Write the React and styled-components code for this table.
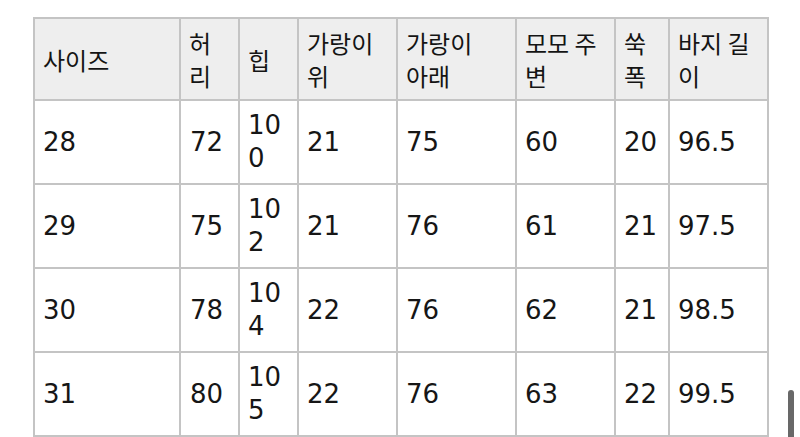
import styled, { createGlobalStyle } from 'styled-components';

const GlobalStyle = createGlobalStyle`
  html, body {
    margin: 0;
    padding: 0;
    background: #ffffff;
  }
  body {
    width: 800px;
    height: 437px;
    overflow: hidden;
    position: relative;
  }
`;

const Page = styled.div`
  padding: 17px 0 0 33px;
`;

const SizeTable = styled.div`
  display: grid;
  width: max-content;
  grid-template-columns: 144px 57px 57px 97px 117px 97px 52px 97px;
  grid-template-rows: 80px repeat(4, 82px);
  gap: 2px;
  padding: 2px;
  background: #c4c4c4;
`;

const HeadCell = styled.div`
  display: flex;
  align-items: center;
  padding: 0 4px 0 8px;
  background: #eeeeee;
  color: #141414;
  font-family: "Noto Sans CJK KR", "Noto Sans", sans-serif;
  font-size: 24px;
  line-height: 33px;
  white-space: pre-line;
`;

const Cell = styled.div`
  display: flex;
  align-items: center;
  padding: 0 4px 0 ${(p) => (p.$first ? 9 : 8)}px;
  background: #ffffff;
  color: #161616;
  font-family: "DejaVu Sans", "Noto Sans CJK KR", sans-serif;
  font-size: 26px;
  line-height: 33px;
  word-break: break-all;
`;

const Scrollbar = styled.div`
  position: absolute;
  left: 788px;
  top: 390px;
  width: 6px;
  height: 60px;
  border-radius: 3px;
  background: #686868;
`;

const headers = [
  '사이즈',
  '허\n리',
  '힙',
  '가랑이\n위',
  '가랑이\n아래',
  '모모 주\n변',
  '쑥\n폭',
  '바지 길\n이',
];

const rows = [
  ['28', '72', '100', '21', '75', '60', '20', '96.5'],
  ['29', '75', '102', '21', '76', '61', '21', '97.5'],
  ['30', '78', '104', '22', '76', '62', '21', '98.5'],
  ['31', '80', '105', '22', '76', '63', '22', '99.5'],
];

export default function App() {
  return (
    <>
      <GlobalStyle />
      <Page>
        <SizeTable>
          {headers.map((h) => (
            <HeadCell key={h}>{h}</HeadCell>
          ))}
          {rows.map((row, r) =>
            row.map((v, c) => (
              <Cell key={r + '-' + c} $first={c === 1}>
                {v}
              </Cell>
            ))
          )}
        </SizeTable>
      </Page>
      <Scrollbar />
    </>
  );
}
